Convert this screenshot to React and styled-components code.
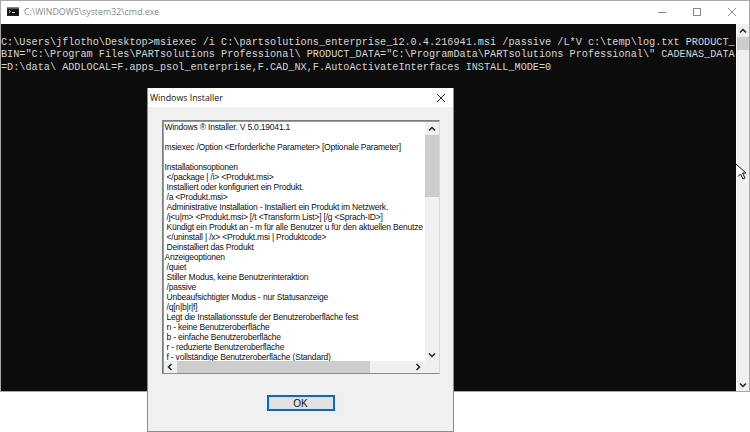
import React from "react";
import styled, { createGlobalStyle } from "styled-components";

const Global = createGlobalStyle`
  html, body { margin: 0; padding: 0; background: #fff; }
  #root { width: 750px; height: 432px; overflow: hidden; }
`;

const Page = styled.div`
  position: relative;
  width: 750px;
  height: 432px;
  overflow: hidden;
  background: #fff;
`;

const ConsoleWindow = styled.div`
  display: flex;
  flex-direction: column;
  box-sizing: border-box;
  width: 750px;
  height: 392px;
  border: 1px solid #a8a8a8;
  background: #fff;
`;

const TitleBar = styled.div`
  display: flex;
  align-items: center;
  box-sizing: border-box;
  height: 23px;
  flex: none;
  padding: 0 0 2px 6px;
  color: #8a8a8a;
  font: 8.85px "Open Sans", sans-serif;
`;

const TitleText = styled.span`
  margin-left: 5px;
  flex: 1;
  white-space: pre;
`;

const CaptionButton = styled.span`
  display: flex;
  width: 35px;
  justify-content: center;
  color: #777;
`;

const ConsoleBody = styled.div`
  flex: 1;
  display: flex;
  min-height: 0;
`;

const Terminal = styled.pre`
  flex: 1;
  margin: 0;
  padding: 13px 0 0 0;
  background: #0c0c0c;
  color: #d6d6d6;
  font: 10.2px/12.4px "Liberation Mono", monospace;
  overflow: hidden;
`;

const ConsoleScroll = styled.div`
  flex: none;
  width: 12px;
  margin-left: 1px;
  display: flex;
  flex-direction: column;
  align-items: stretch;
  background: #f0f0f0;
`;

const ArrowCell = styled.div`
  height: ${(p) => p.$h || 12}px;
  width: ${(p) => p.$w || "auto"};
  flex: none;
  display: flex;
  align-items: center;
  justify-content: center;
`;

const ConsoleThumb = styled.div`
  height: 13px;
  background: #cdcdcd;
  flex: none;
`;

const Spacer = styled.div`
  flex: 1;
`;

const Dialog = styled.div`
  position: absolute;
  left: 147px;
  top: 88px;
  width: 307px;
  height: 344px;
  box-sizing: border-box;
  border: 1px solid #8c8c8c;
  border-top: 0;
  background: #f0f0f0;
  display: flex;
  flex-direction: column;
  align-items: center;
`;

const DialogTitle = styled.div`
  align-self: stretch;
  height: 19px;
  flex: none;
  background: #fff;
  display: flex;
  align-items: center;
  justify-content: space-between;
  padding: 0 7px 0 2px;
  color: #111;
  font: 8.8px "Open Sans", sans-serif;
`;

const ListFrame = styled.div`
  box-sizing: border-box;
  margin-top: 13px;
  width: 278px;
  height: 254px;
  flex: none;
  border: 1px solid;
  border-color: #7d7d7d #d8d8d8 #8a8a8a #7d7d7d;
  box-shadow: inset 1px 1px 0 #9a9a9a;
  display: grid;
  grid-template-columns: 1fr 14px;
  grid-template-rows: 1fr 12px;
  background: #f0f0f0;
  padding: 1px 0 0 1px;
`;

const ListText = styled.div`
  background: #fff;
  overflow: hidden;
  white-space: pre;
  padding: 0 0 0 1px;
  color: #111;
  font: 8.5px/10px "Liberation Sans", sans-serif;
  letter-spacing: -0.2px;
`;

const Line = styled.div`
  height: 10px;
  padding-left: ${(p) => (p.$indent ? 2 : 0)}px;
`;

const VScroll = styled.div`
  display: flex;
  flex-direction: column;
  background: #f0f0f0;
`;

const VThumb = styled.div`
  height: 62px;
  flex: none;
  background: #cdcdcd;
`;

const HScroll = styled.div`
  display: flex;
  background: #f0f0f0;
`;

const HThumb = styled.div`
  width: 193px;
  flex: none;
  background: #cdcdcd;
`;

const Corner = styled.div`
  background: #f0f0f0;
`;

const OkButton = styled.button`
  margin-top: 21px;
  width: 68px;
  height: 16px;
  box-sizing: border-box;
  flex: none;
  padding: 0;
  border: 2px solid #0a6ac8;
  background: #e1e1e1;
  color: #111;
  font: 10px "Liberation Sans", sans-serif;
`;

const Cursor = styled.svg`
  position: absolute;
  left: 735px;
  top: 163px;
`;

const Chevron = ({ dir, stroke = "#222", size = 8 }) => {
  const paths = {
    up: "M1 5.5 L4 2.5 L7 5.5",
    down: "M1 2.5 L4 5.5 L7 2.5",
    left: "M5.5 1 L2.5 4 L5.5 7",
    right: "M2.5 1 L5.5 4 L2.5 7",
  };
  return (
    <svg width={size} height={size} viewBox="0 0 8 8" fill="none">
      <path d={paths[dir]} stroke={stroke} strokeWidth="1.5" />
    </svg>
  );
};

const CmdIcon = () => (
  <svg width="12" height="9" viewBox="0 0 12 9">
    <rect width="12" height="9" fill="#222" />
    <rect x="0" y="0" width="12" height="1.5" fill="#888" />
    <rect x="1" y="2.5" width="10" height="5.5" fill="#111" />
    <path d="M2 3.5 L3.5 4.5 L2 5.5" stroke="#ddd" fill="none" strokeWidth="1" />
    <rect x="5" y="5" width="3" height="1" fill="#ddd" />
  </svg>
);

const terminalLines = [
  "C:\\Users\\jflotho\\Desktop>msiexec /i C:\\partsolutions_enterprise_12.0.4.216941.msi /passive /L*V c:\\temp\\log.txt PRODUCT_",
  "BIN=\"C:\\Program Files\\PARTsolutions Professional\\ PRODUCT_DATA=\"C:\\ProgramData\\PARTsolutions Professional\\\" CADENAS_DATA",
  "=D:\\data\\ ADDLOCAL=F.apps_psol_enterprise,F.CAD_NX,F.AutoActivateInterfaces INSTALL_MODE=0",
];

const helpLines = [
  ["Windows ® Installer. V 5.0.19041.1"],
  [""],
  ["msiexec /Option <Erforderliche Parameter> [Optionale Parameter]"],
  [""],
  ["Installationsoptionen"],
  ["</package | /i> <Produkt.msi>", 1],
  ["Installiert oder konfiguriert ein Produkt.", 1],
  ["/a <Produkt.msi>", 1],
  ["Administrative Installation - Installiert ein Produkt im Netzwerk.", 1],
  ["/j<u|m> <Produkt.msi> [/t <Transform List>] [/g <Sprach-ID>]", 1],
  ["Kündigt ein Produkt an - m für alle Benutzer u für den aktuellen Benutze", 1],
  ["</uninstall | /x> <Produkt.msi | Produktcode>", 1],
  ["Deinstalliert das Produkt", 1],
  ["Anzeigeoptionen"],
  ["/quiet", 1],
  ["Stiller Modus, keine Benutzerinteraktion", 1],
  ["/passive", 1],
  ["Unbeaufsichtigter Modus - nur Statusanzeige", 1],
  ["/q[n|b|r|f]", 1],
  ["Legt die Installationsstufe der Benutzeroberfläche fest", 1],
  ["n - keine Benutzeroberfläche", 1],
  ["b - einfache Benutzeroberfläche", 1],
  ["r - reduzierte Benutzeroberfläche", 1],
  ["f - vollständige Benutzeroberfläche (Standard)", 1],
];

export default function App() {
  return (
    <Page>
      <Global />
      <ConsoleWindow>
        <TitleBar>
          <CmdIcon />
          <TitleText>C:\WINDOWS\system32\cmd.exe</TitleText>
          <CaptionButton>
            <svg width="10" height="10" viewBox="0 0 10 10"><path d="M1 5.5H9" stroke="#888" /></svg>
          </CaptionButton>
          <CaptionButton>
            <svg width="10" height="10" viewBox="0 0 10 10"><rect x="1.5" y="1.5" width="7" height="7" fill="none" stroke="#888" /></svg>
          </CaptionButton>
          <CaptionButton>
            <svg width="10" height="10" viewBox="0 0 10 10"><path d="M1 1L9 9M9 1L1 9" stroke="#888" /></svg>
          </CaptionButton>
        </TitleBar>
        <ConsoleBody>
          <Terminal>{terminalLines.join("\n")}</Terminal>
          <ConsoleScroll>
            <ArrowCell $h={13}><Chevron dir="up" /></ArrowCell>
            <ConsoleThumb />
            <Spacer />
            <ArrowCell $h={13}><Chevron dir="down" /></ArrowCell>
          </ConsoleScroll>
        </ConsoleBody>
      </ConsoleWindow>

      <Dialog>
        <DialogTitle>
          <span>Windows Installer</span>
          <svg width="10" height="10" viewBox="0 0 10 10"><path d="M1 1L9 9M9 1L1 9" stroke="#222" /></svg>
        </DialogTitle>
        <ListFrame>
          <ListText>
            {helpLines.map(([text, indent], i) => (
              <Line key={i} $indent={indent}>{text}</Line>
            ))}
          </ListText>
          <VScroll>
            <ArrowCell $h={13}><Chevron dir="up" /></ArrowCell>
            <VThumb />
            <Spacer />
            <ArrowCell $h={13}><Chevron dir="down" /></ArrowCell>
          </VScroll>
          <HScroll>
            <ArrowCell $h={12} $w="13px"><Chevron dir="left" /></ArrowCell>
            <HThumb />
            <Spacer />
            <ArrowCell $h={12} $w="13px"><Chevron dir="right" /></ArrowCell>
          </HScroll>
          <Corner />
        </ListFrame>
        <OkButton>OK</OkButton>
      </Dialog>

      <Cursor width="14" height="20" viewBox="0 0 14 20">
        <path d="M1 1 L11 10 L7.5 10 L10 15 L8 16 L5.5 11 L3 13.5" fill="#fff" stroke="#111" strokeWidth="1" />
      </Cursor>
    </Page>
  );
}
